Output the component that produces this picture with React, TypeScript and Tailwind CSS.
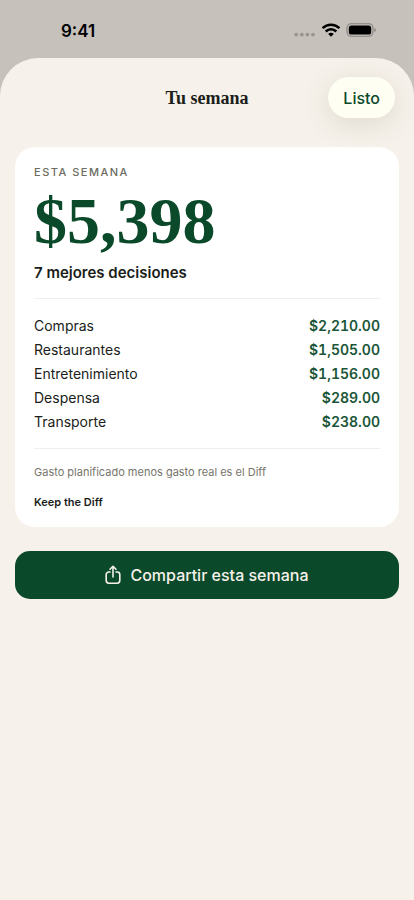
const rows = [
  { name: "Compras", amount: "$2,210.00" },
  { name: "Restaurantes", amount: "$1,505.00" },
  { name: "Entretenimiento", amount: "$1,156.00" },
  { name: "Despensa", amount: "$289.00" },
  { name: "Transporte", amount: "$238.00" },
];

function StatusBar() {
  return (
    <div className="flex h-[58px] items-center justify-between pt-[3px] pr-[37px] pl-[61px]">
      <span className="text-[17px] leading-[22px] font-semibold text-black">9:41</span>
      <div className="flex items-center pb-px">
        <svg width="22" height="14" viewBox="0 0 22 14" fill="#99958f" aria-hidden="true">
          <circle cx="2.2" cy="11.6" r="1.9" />
          <circle cx="7.8" cy="11.6" r="1.9" />
          <circle cx="13.4" cy="11.6" r="1.9" />
          <circle cx="19" cy="11.6" r="1.9" />
        </svg>
        <svg className="ml-[5px]" width="20" height="14" viewBox="0 0 20 14" fill="none" stroke="#000" strokeWidth="2.5" aria-hidden="true">
          <path d="M1.6 5.2a12 12 0 0 1 16.8 0" />
          <path d="M4.7 8.5a7.6 7.6 0 0 1 10.6 0" />
          <path d="M10 13.8 7.2 10.9a3.9 3.9 0 0 1 5.6 0Z" fill="#000" stroke="none" />
        </svg>
        <svg className="ml-[5px]" width="31" height="14" viewBox="0 0 31 14" aria-hidden="true">
          <rect x="1" y="0.7" width="26" height="12.6" rx="4.2" fill="none" stroke="#85817c" strokeWidth="1.1" />
          <rect x="2.8" y="2.5" width="22.4" height="9" rx="2.6" fill="#000" />
          <path d="M28.4 5c1.9.6 1.9 3.4 0 4Z" fill="#85817c" />
        </svg>
      </div>
    </div>
  );
}

function ShareIcon() {
  return (
    <svg width="16" height="20" viewBox="0 0 16 20" fill="none" stroke="currentColor" strokeWidth="1.6" strokeLinecap="round" strokeLinejoin="round" aria-hidden="true">
      <path d="M5 7H3.8A2.6 2.6 0 0 0 1.2 9.6v6A2.6 2.6 0 0 0 3.8 18.2h8.4a2.6 2.6 0 0 0 2.6-2.6v-6A2.6 2.6 0 0 0 12.2 7H11" />
      <path d="M8 12V1.6M5 4.3l3-3 3 3" />
    </svg>
  );
}

export default function App() {
  return (
    <div className="flex min-h-screen flex-col bg-[#c6c1bb] font-['Inter',sans-serif] text-[#1a1d19]">
      <StatusBar />
      <main className="flex-1 overflow-hidden rounded-t-[38px] bg-[#f6f1ea] px-[15px] pb-8">
        <header className="grid grid-cols-[1fr_auto_1fr] items-center pt-[19px] pr-1">
          <h1 className="col-start-2 pl-1 font-['Liberation_Serif',serif] text-[18px] leading-[24px] font-bold">Tu semana</h1>
          <button type="button" className="h-[41px] justify-self-end rounded-full bg-[#fffef2] px-[15px] text-[16px] font-medium text-[#0b492b] shadow-[0_6px_28px_rgba(80,70,30,0.13)]">
            Listo
          </button>
        </header>

        <section className="mt-[29px] rounded-[20px] bg-white px-[19px] pt-[17px] pb-[17px]">
          <h2 className="text-[11px] leading-[16px] font-medium tracking-[1.5px] text-[#6d6c62]">ESTA SEMANA</h2>
          <p className="mt-[8px] font-['Liberation_Serif',serif] text-[66px] leading-[66px] font-bold text-[#0b492b]">$5,398</p>
          <p className="mt-[9px] text-[15px] leading-[20px] font-semibold">7 mejores decisiones</p>
          <dl className="mt-[15px] border-y border-[#efefed] pt-[15px] pb-[14px]">
            {rows.map((row) => (
              <div key={row.name} className="flex justify-between text-[14px] leading-[24px]">
                <dt>{row.name}</dt>
                <dd className="font-semibold text-[#1b5638] tabular-nums">{row.amount}</dd>
              </div>
            ))}
          </dl>
          <p className="mt-[15px] text-[11px] leading-[16px] text-[#77756b]">Gasto planificado menos gasto real es el Diff</p>
          <p className="mt-[14px] text-[11px] leading-[16px] font-semibold">Keep the Diff</p>
        </section>

        <button type="button" className="mt-[24px] flex h-[48px] w-full items-center justify-center gap-[9px] rounded-[15px] bg-[#0b492b] text-[16px] font-medium text-[#f6f1ea]">
          <ShareIcon />
          Compartir esta semana
        </button>
      </main>
    </div>
  );
}
